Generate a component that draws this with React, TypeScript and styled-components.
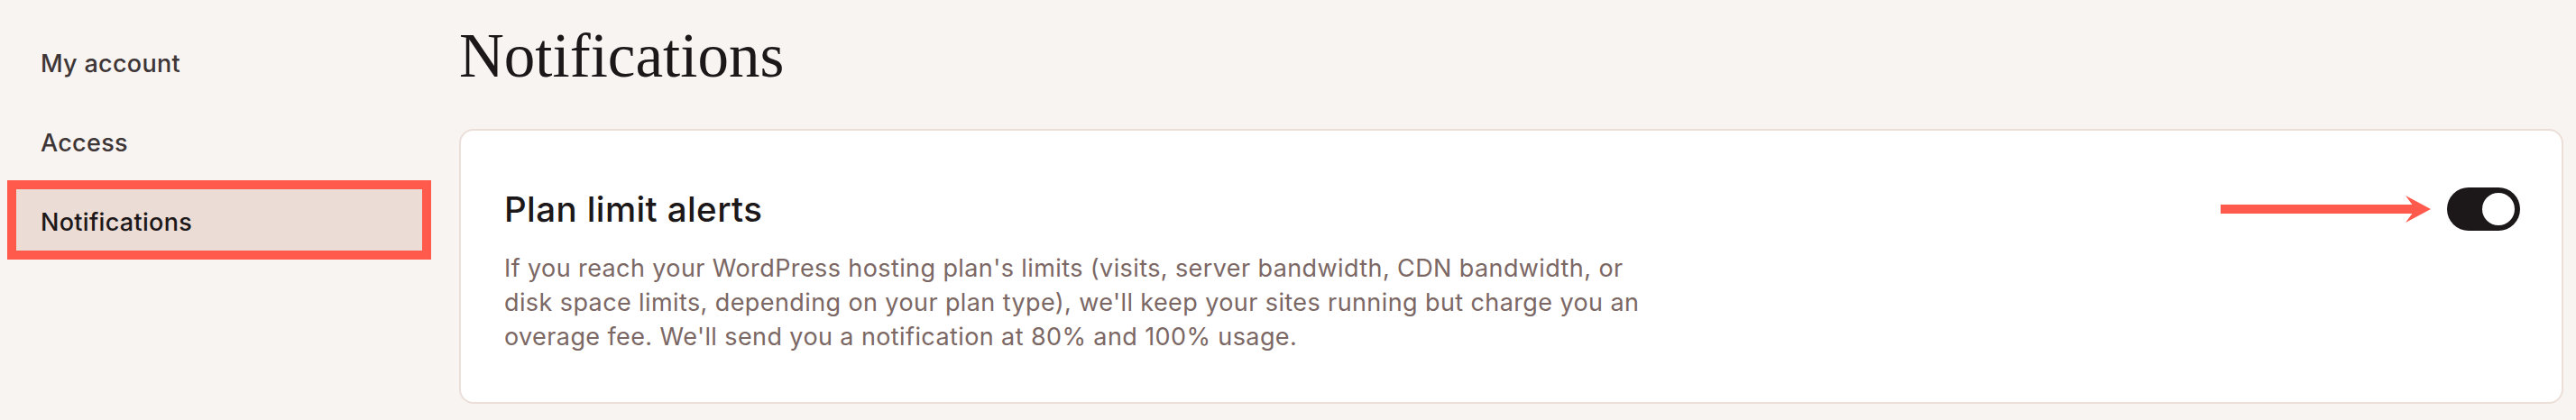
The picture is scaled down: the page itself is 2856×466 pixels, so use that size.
import styled, { createGlobalStyle } from "styled-components";

const GlobalStyle = createGlobalStyle`
  body {
    margin: 0;
    background: #f8f4f1;
    font-family: Inter, "Noto Sans", sans-serif;
  }
`;

const Page = styled.div`
  display: flex;
  gap: 41px;
  padding: 0 14px 0 18px;
`;
const Sidebar = styled.nav`
  width: 450px;
  flex-shrink: 0;
  padding-top: 34px;
  display: flex;
  flex-direction: column;
  gap: 20px;
`;
const NavItem = styled.a<{ $active?: boolean }>`
  display: flex;
  align-items: center;
  height: 68px;
  box-sizing: border-box;
  padding: 4px 0 0 27px;
  font-size: 27px;
  font-weight: 500;
  letter-spacing: 0.3px;
  color: ${(props) => (props.$active ? "#1c1718" : "#3d3536")};
  background: ${(props) => (props.$active ? "#ebdcd5" : "transparent")};
  outline: ${(props) => (props.$active ? "10px solid #ff5a4c" : "none")};
  text-decoration: none;
`;
const Main = styled.main`
  flex: 1;
  padding-top: 21px;
`;
const Title = styled.h1`
  margin: 0;
  font-family: "Liberation Serif", "DejaVu Serif", serif;
  font-weight: 400;
  font-size: 69px;
  line-height: 82px;
  color: #1c1718;
`;
const Card = styled.section`
  margin-top: 40px;
  background: #fff;
  border: 2px solid #ebdfd8;
  border-radius: 16px;
  padding: 63px 46px 53px 48px;
`;
const CardHeader = styled.div`
  display: flex;
  align-items: center;
  height: 48px;
`;
const CardTitle = styled.h2`
  margin: 0;
  flex: 1;
  font-size: 38.5px;
  font-weight: 500;
  letter-spacing: 0.4px;
  line-height: 48px;
  color: #1c1718;
`;
const Description = styled.p`
  margin: 23px 0 0;
  max-width: 1275px;
  font-size: 27px;
  letter-spacing: 0.4px;
  line-height: 38px;
  color: #7b6764;
`;
const Arrow = styled.svg`
  margin-right: 18px;
`;
const Toggle = styled.button<{ $on?: boolean }>`
  width: 81px;
  height: 48px;
  padding: 6px;
  border: none;
  border-radius: 24px;
  background: ${(props) => (props.$on ? "#1c1718" : "#d8ccc6")};
  display: flex;
  justify-content: ${(props) => (props.$on ? "flex-end" : "flex-start")};
  align-items: center;
  cursor: pointer;
`;
const Knob = styled.span`
  width: 36px;
  height: 36px;
  border-radius: 50%;
  background: #fff;
`;

const navItems = ["My account", "Access", "Notifications"];

function App() {
  return (
    <>
      <GlobalStyle />
      <Page>
        <Sidebar>
          {navItems.map((item) => (
            <NavItem key={item} $active={item === "Notifications"}>
              {item}
            </NavItem>
          ))}
        </Sidebar>
        <Main>
          <Title>Notifications</Title>
          <Card>
            <CardHeader>
              <CardTitle>Plan limit alerts</CardTitle>
              <Arrow width="233" height="30" viewBox="0 0 233 30">
                <rect x="0" y="10" width="218" height="10" fill="#ff5a4c" />
                <polygon points="205,0 233,15 205,30 216,15" fill="#ff5a4c" />
              </Arrow>
              <Toggle $on aria-label="Plan limit alerts">
                <Knob />
              </Toggle>
            </CardHeader>
            <Description>
              If you reach your WordPress hosting plan's limits (visits, server
              bandwidth, CDN bandwidth, or disk space limits, depending on your
              plan type), we'll keep your sites running but charge you an
              overage fee. We'll send you a notification at 80% and 100% usage.
            </Description>
          </Card>
        </Main>
      </Page>
    </>
  );
}

export default App;
